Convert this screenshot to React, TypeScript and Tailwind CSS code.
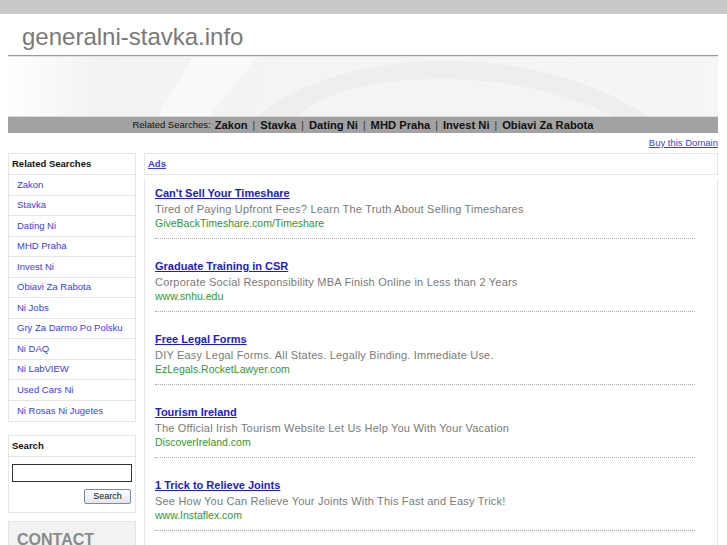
import React from "react";

const related = [
  "Zakon",
  "Stavka",
  "Dating Ni",
  "MHD Praha",
  "Invest Ni",
  "Obiavi Za Rabota",
  "Ni Jobs",
  "Gry Za Darmo Po Polsku",
  "Ni DAQ",
  "Ni LabVIEW",
  "Used Cars Ni",
  "Ni Rosas Ni Jugetes",
];

const topLinks = ["Zakon", "Stavka", "Dating Ni", "MHD Praha", "Invest Ni", "Obiavi Za Rabota"];

const ads = [
  {
    title: "Can't Sell Your Timeshare",
    desc: "Tired of Paying Upfront Fees? Learn The Truth About Selling Timeshares",
    url: "GiveBackTimeshare.com/Timeshare",
  },
  {
    title: "Graduate Training in CSR",
    desc: "Corporate Social Responsibility MBA Finish Online in Less than 2 Years",
    url: "www.snhu.edu",
  },
  {
    title: "Free Legal Forms",
    desc: "DIY Easy Legal Forms. All States. Legally Binding. Immediate Use.",
    url: "EzLegals.RocketLawyer.com",
  },
  {
    title: "Tourism Ireland",
    desc: "The Official Irish Tourism Website Let Us Help You With Your Vacation",
    url: "DiscoverIreland.com",
  },
  {
    title: "1 Trick to Relieve Joints",
    desc: "See How You Can Relieve Your Joints With This Fast and Easy Trick!",
    url: "www.Instaflex.com",
  },
];

function Swoosh() {
  return (
    <svg className="absolute inset-0 h-full w-full" viewBox="0 0 710 60" preserveAspectRatio="none">
      <defs>
        <linearGradient id="fade" x1="0" y1="0" x2="1" y2="0">
          <stop offset="0" stopColor="#ffffff" />
          <stop offset="0.12" stopColor="#f3f3f3" />
          <stop offset="1" stopColor="#f6f6f6" />
        </linearGradient>
      </defs>
      <rect width="710" height="60" fill="url(#fade)" />
      <path d="M150 60 L185 0 L250 0 L200 60 Z" fill="#f9f9f9" />
      <path d="M250 60 C330 -10 520 -20 640 60 L605 60 C500 8 340 12 290 60 Z" fill="#eeeeee" />
      <path d="M290 60 C360 18 500 12 605 60 Z" fill="#f4f4f4" />
    </svg>
  );
}

export default function App() {
  return (
    <div className="min-h-[545px] bg-white" style={{ fontFamily: '"Liberation Sans", Arial, sans-serif' }}>
      <div className="h-[14px] bg-[#c9c9c9]" />

      <div className="mx-[8px] w-[710px]">
        <div className="h-[42px] border-b border-[#9a9a9a] pl-[14px] pt-[10px] text-[24px] leading-[26px] text-[#7a7a7a]">
          generalni-stavka.info
        </div>
        <div className="relative h-[60px] overflow-hidden border-t border-[#e2e2e2]">
          <Swoosh />
        </div>
        <div className="flex h-[17px] items-center justify-center border-t border-[#d8d8d8] bg-[#a2a2a2] text-[#111]">
          <span className="mr-[4px] text-[9.5px]">Related Searches:</span>
          {topLinks.map((l, i) => (
            <React.Fragment key={l}>
              {i > 0 && <span className="mx-[5px] text-[10px] text-[#333]">|</span>}
              <a className="text-[11.2px] font-bold">{l}</a>
            </React.Fragment>
          ))}
        </div>
        <div className="flex h-[20px] items-center justify-end text-[9.5px]">
          <a className="text-[#3a3aff] underline">Buy this Domain</a>
        </div>

        <div className="flex items-start gap-[8px]">
          {/* Sidebar */}
          <div className="w-[128px] shrink-0">
            <div className="border border-[#e6e6e6]">
              <div className="flex h-[21px] items-center border-b border-[#e6e6e6] pl-[3px] text-[9.5px] font-bold text-[#111]">
                Related Searches
              </div>
              {related.map((r, i) => (
                <div
                  key={r}
                  className={`flex h-[20.5px] items-center pl-[8px] text-[9.5px] text-[#3a3aff] ${
                    i < related.length - 1 ? "border-b border-[#e6e6e6]" : ""
                  }`}
                >
                  {r}
                </div>
              ))}
            </div>

            <div className="mt-[13px] h-[78px] border border-[#e6e6e6]">
              <div className="flex h-[21px] items-center border-b border-[#e6e6e6] pl-[3px] text-[9.5px] font-bold text-[#111]">
                Search
              </div>
              <div className="px-[3px] pt-[7px]">
                <div className="h-[18px] w-full border border-[#333] bg-white" />
                <div className="mt-[7px] flex justify-end pr-[1px]">
                  <button className="h-[15px] w-[47px] rounded-[2px] border border-[#7a8aa8] bg-gradient-to-b from-[#ffffff] to-[#e2e6ee] text-[9px] leading-[13px] text-[#111]">
                    Search
                  </button>
                </div>
              </div>
            </div>

            <div className="mt-[8px] h-[40px] border border-[#e3e3e3] bg-[#f2f2f2] pl-[8px] pt-[8px] text-[16px] font-bold leading-[20px] text-[#8a8a8a]">
              CONTACT
            </div>
          </div>

          {/* Main */}
          <div className="flex-1">
            <div className="flex h-[22px] items-center border border-[#e6e6e6] pl-[3px] text-[9.5px] font-bold text-[#3a3aff] underline">
              Ads
            </div>
            <div className="mt-[3px] h-[400px] border-x border-[#e6e6e6] pl-[10px] pr-[22px] pt-[7px]">
              {ads.map((a) => (
                <div key={a.title} className="h-[73px] pt-[1px]">
                  <a className="block text-[11px] font-bold leading-[14px] text-[#1a1ad8] underline">{a.title}</a>
                  <div className="mt-[2px] text-[11px] leading-[14px] tracking-[0.2px] text-[#7a7a7a]">{a.desc}</div>
                  <div className="text-[10.5px] leading-[14px] text-[#2e9a2e]">{a.url}</div>
                  <div className="mt-[8px] border-b border-dotted border-[#aaaaaa]" />
                </div>
              ))}
            </div>
          </div>
        </div>
      </div>
    </div>
  );
}
